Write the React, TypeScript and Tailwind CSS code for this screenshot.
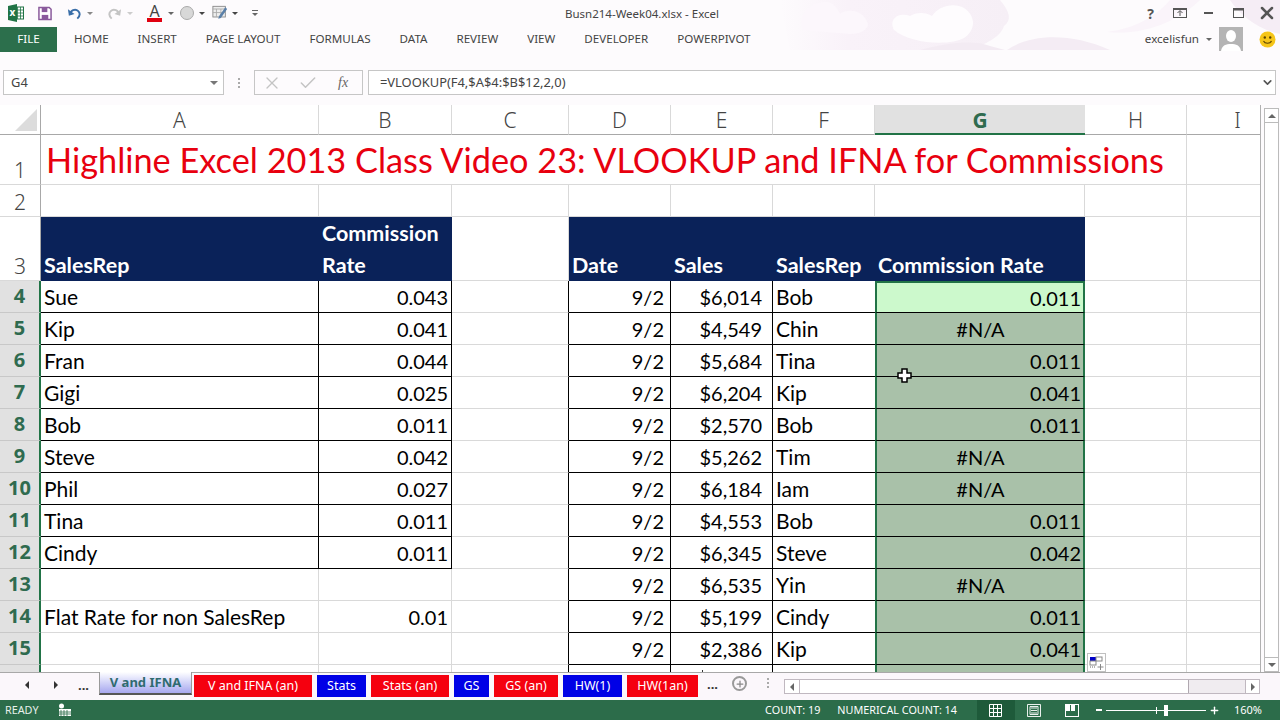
import { Check, ChevronDown, Plus, X } from "lucide-react";

const leftRows = [
  ["Sue", "0.043"],
  ["Kip", "0.041"],
  ["Fran", "0.044"],
  ["Gigi", "0.025"],
  ["Bob", "0.011"],
  ["Steve", "0.042"],
  ["Phil", "0.027"],
  ["Tina", "0.011"],
  ["Cindy", "0.011"],
];

const rightRows = [
  ["$6,014", "Bob", "0.011"],
  ["$4,549", "Chin", "#N/A"],
  ["$5,684", "Tina", "0.011"],
  ["$6,204", "Kip", "0.041"],
  ["$2,570", "Bob", "0.011"],
  ["$5,262", "Tim", "#N/A"],
  ["$6,184", "Iam", "#N/A"],
  ["$4,553", "Bob", "0.011"],
  ["$6,345", "Steve", "0.042"],
  ["$6,535", "Yin", "#N/A"],
  ["$5,199", "Cindy", "0.011"],
  ["$2,386", "Kip", "0.041"],
];

const columns = ["A", "B", "C", "D", "E", "F", "G", "H", "I"];
const ribbonTabs = ["HOME", "INSERT", "PAGE LAYOUT", "FORMULAS", "DATA", "REVIEW", "VIEW", "DEVELOPER", "POWERPIVOT"];
const sheetTabs = [
  ["V and IFNA (an)", "bg-[#f5000f] w-[118px]"],
  ["Stats", "bg-[#0000e6] w-[49px]"],
  ["Stats (an)", "bg-[#f5000f] w-[78px]"],
  ["GS", "bg-[#0000e6] w-[35px]"],
  ["GS (an)", "bg-[#f5000f] w-[64px]"],
  ["HW(1)", "bg-[#0000e6] w-[59px]"],
  ["HW(1an)", "bg-[#f5000f] w-[71px]"],
];

const gridCell = "border-r border-b border-[#d9d9d9]";
const blackCell = "border-r border-b border-black";
const cellText = "flex items-center px-[3px] text-[21px] text-black overflow-hidden whitespace-nowrap";
const numText = "flex items-center px-[3px] text-[20px] text-black overflow-hidden whitespace-nowrap";
const headText = "flex items-end px-[3px] text-[21.5px] font-bold leading-[32px] text-white bg-[#0a2259] overflow-hidden whitespace-nowrap";

function RowHeader({ n, active }: { n?: number; active?: boolean }) {
  return (
    <div
      className={
        active
          ? "flex items-end justify-center pb-[1px] bg-[#e1e1e1] border-r-2 border-r-[#217346] border-b border-b-[#c8c8c8] text-[20px] font-bold text-[#2f6b4f] font-['Noto_Sans',sans-serif] leading-[30px]"
          : "flex items-end justify-center bg-white border-r border-r-[#a8a8a8] border-b border-b-[#d9d9d9] text-[21px] font-light text-[#444] font-['Noto_Sans',sans-serif] leading-[28px]"
      }
    >
      {n}
    </div>
  );
}

function TitleDecor() {
  return (
    <svg className="absolute left-[760px] top-0" width="520" height="52" viewBox="0 0 520 52">
      <defs>
        <linearGradient id="fade" x1="0" x2="1" y1="0" y2="0">
          <stop offset="0" stopColor="#f9f2f9" stopOpacity="0" />
          <stop offset="0.3" stopColor="#f9f2f9" />
          <stop offset="1" stopColor="#f6eff6" />
        </linearGradient>
      </defs>
      <path d="M20 0H240C250 12 252 20 244 26C240 38 225 44 210 50H30Z" fill="url(#fade)" />
      <path d="M42 30C38 12 52 2 66 2C74 2 78 10 80 14C88 8 104 10 108 24C108 30 100 34 90 34Z" fill="#fcf7fc" />
      <path d="M134 30C128 18 140 12 150 16C156 12 166 12 172 16C178 6 194 2 204 8C216 16 216 30 204 38C190 46 150 44 134 30Z" fill="#fefcfe" />
      <path d="M160 50C190 42 215 40 230 46L245 50Z" fill="#f3ebf3" />
      <path d="M247 50C270 34 310 32 350 50Z" fill="#f4ecf4" />
      <path d="M300 0C340 0 380 0 440 0C420 20 385 36 347 32C380 28 400 12 410 0Z" fill="#faf4fa" />
      <path d="M470 0H520V34C500 30 480 16 470 0Z" fill="#f5edf5" />
    </svg>
  );
}

function ExcelLogo() {
  return (
    <svg width="16" height="18" viewBox="0 0 16 18">
      <rect x="6" y="3" width="9.5" height="12" fill="#fff" stroke="#217346" />
      <path d="M9.5 3v12M12.5 3v12M6 6h10M6 9h10M6 12h10" stroke="#217346" strokeWidth="0.8" />
      <path d="M0 2l9-2v18L0 16Z" fill="#217346" />
      <text x="1.5" y="12" fontSize="10" fontWeight="700" fill="#fff" fontFamily="Noto Sans">x</text>
    </svg>
  );
}

function Caret({ className }: { className: string }) {
  return <span className={`w-0 h-0 border-x-[3px] border-x-transparent border-t-[3px] ${className}`} />;
}

function QuickAccess() {
  return (
    <div className="flex items-center h-[26px] pl-[8px]">
      <ExcelLogo />
      <svg className="ml-[14px]" width="14" height="15" viewBox="0 0 15 15">
        <path d="M1 1h11l2 2v11H1Z" fill="#fff" stroke="#8a5a9c" strokeWidth="1.6" />
        <rect x="4" y="1" width="6" height="5" fill="#8a5a9c" />
        <rect x="4" y="9" width="7" height="5" fill="#8a5a9c" />
      </svg>
      <svg className="ml-[15px]" width="15" height="15" viewBox="0 0 16 15" fill="none">
        <path d="M4 9C3 4 9 2 12 5c2 2 2 5-1 8" stroke="#3a6ea8" strokeWidth="2" />
        <path d="M1 3l1 7 6-2Z" fill="#3a6ea8" />
      </svg>
      <Caret className="ml-[5px] border-t-[#888]" />
      <svg className="ml-[14px]" width="15" height="15" viewBox="0 0 16 15" fill="none">
        <path d="M12 9C13 4 7 2 4 5c-2 2-2 5 1 8" stroke="#c4c4c4" strokeWidth="2" />
        <path d="M15 3l-1 7-6-2Z" fill="#c4c4c4" />
      </svg>
      <Caret className="ml-[5px] border-t-[#ccc]" />
      <div className="ml-[14px] w-[15px] flex flex-col items-center text-[16px] leading-[14px] text-[#444] font-['Noto_Sans',sans-serif]">
        A
        <span className="block w-[15px] h-[4px] bg-[#e00010]" />
      </div>
      <Caret className="ml-[6px] border-t-[#666]" />
      <span className="ml-[6px] w-[14px] h-[14px] rounded-full bg-[#d8d8d8] border border-[#aaa]" />
      <Caret className="ml-[5px] border-t-[#444]" />
      <svg className="ml-[7px]" width="16" height="16" viewBox="0 0 18 17" fill="none">
        <rect x="1" y="1" width="14" height="12" fill="#eee" stroke="#888" />
        <path d="M1 4h14M5 4v9M10 4v9M1 8h14" stroke="#aaa" />
        <path d="M15 2L8 12l-1 3 3-1 7-10Z" fill="#5a7fa8" />
      </svg>
      <Caret className="ml-[4px] border-t-[#444]" />
      <div className="ml-[14px] flex flex-col items-center gap-[1px]">
        <span className="block w-[6px] h-[1px] bg-[#666]" />
        <span className="w-0 h-0 border-x-[3px] border-x-transparent border-t-[3px] border-t-[#666] mt-[1px]" />
      </div>
    </div>
  );
}

function WindowButtons() {
  return (
    <div className="flex items-center h-[26px] text-[#555]">
      <span className="w-[19px] text-[14px] font-bold font-['Noto_Sans',sans-serif] text-center">?</span>
      <svg className="ml-[13px]" width="14" height="10" viewBox="0 0 14 10" fill="none">
        <rect x="0.5" y="0.5" width="13" height="9" stroke="#555" />
        <path d="M7 8V3M4.5 5L7 2.5 9.5 5M0 1.5h14" stroke="#555" />
      </svg>
      <span className="ml-[17px] w-[9px] h-[2px] bg-[#555]" />
      <svg className="ml-[20px]" width="11" height="10" viewBox="0 0 11 10" fill="none">
        <rect x="0.5" y="0.5" width="10" height="9" stroke="#555" />
        <path d="M0 1.5h11" stroke="#555" strokeWidth="2" />
      </svg>
      <X className="ml-[13px] mr-[3px]" size={20} strokeWidth={3} />
    </div>
  );
}

function Smiley() {
  return (
    <svg width="17" height="17" viewBox="0 0 17 17">
      <circle cx="8.5" cy="8.5" r="8" fill="#f5c518" />
      <circle cx="5.8" cy="6.5" r="1.2" fill="#5a4200" />
      <circle cx="11.2" cy="6.5" r="1.2" fill="#5a4200" />
      <path d="M4.5 10c1.5 3 6.5 3 8 0" stroke="#5a4200" strokeWidth="1.1" fill="none" />
    </svg>
  );
}

function Avatar() {
  return (
    <svg width="24" height="24" viewBox="0 0 24 24">
      <rect width="24" height="24" fill="#b4b4b4" />
      <ellipse cx="12" cy="9" rx="5" ry="6" fill="#fff" />
      <path d="M2 24c1-6 5-7 10-7s9 1 10 7Z" fill="#fff" />
    </svg>
  );
}

function Ribbon() {
  return (
    <div className="relative h-[52px] bg-[#fdfbfd] shrink-0 overflow-hidden font-['Noto_Sans',sans-serif]">
      <TitleDecor />
      <div className="relative flex justify-between h-[26px]">
        <QuickAccess />
        <span className="absolute left-[565px] top-[5px] text-[11.5px] text-[#444] leading-[17px]">Busn214-Week04.xlsx - Excel</span>
        <WindowButtons />
      </div>
      <div className="relative flex items-center h-[26px]">
        <div className="w-[57px] h-[25px] bg-[#2c6f4c] text-white text-[11.6px] flex items-center justify-center">FILE</div>
        <div className="flex ml-[17px] gap-[29px] text-[11.6px] text-[#444]">
          {ribbonTabs.map((t) => (
            <span key={t}>{t}</span>
          ))}
        </div>
        <div className="ml-auto flex items-center text-[11.6px] text-[#444] pr-[4px]">
          <span>excelisfun</span>
          <Caret className="ml-[7px] border-t-[#666]" />
          <span className="ml-[7px]"><Avatar /></span>
          <span className="ml-[16px]"><Smiley /></span>
        </div>
      </div>
    </div>
  );
}

function FormulaBar() {
  return (
    <div className="flex items-start h-[53px] pt-[18px] pb-[10px] bg-[#fdfbfd] shrink-0 font-['Noto_Sans',sans-serif] text-[12.9px] text-[#444]">
      <div className="ml-[3px] w-[221px] h-[25px] bg-white border border-[#c6c6c6] flex items-center justify-between pl-[7px] pr-[5px]">
        <span>G4</span>
        <span className="w-0 h-0 border-x-[4px] border-x-transparent border-t-[4px] border-t-[#777]" />
      </div>
      <div className="w-[30px] h-[25px] flex flex-col items-center justify-center gap-[2px]">
        <span className="w-[2px] h-[2px] bg-[#aaa]" />
        <span className="w-[2px] h-[2px] bg-[#aaa]" />
        <span className="w-[2px] h-[2px] bg-[#aaa]" />
      </div>
      <div className="w-[109px] h-[25px] border border-[#c6c6c6] flex items-center pl-[7px] gap-[16px]">
        <X size={20} strokeWidth={1.6} className="text-[#c4c4c4]" />
        <Check size={20} strokeWidth={1.8} className="text-[#c4c4c4]" />
        <span className="ml-[4px] font-['Liberation_Serif',serif] italic text-[#666] text-[14px]">fx</span>
      </div>
      <div className="ml-[5px] w-[908px] h-[25px] bg-white border border-[#c6c6c6] flex items-center justify-between pl-[11px] pr-[1px]">
        <span>=VLOOKUP(F4,$A$4:$B$12,2,0)</span>
        <ChevronDown size={13} strokeWidth={3} className="text-[#555]" />
      </div>
    </div>
  );
}

function Sheet() {
  return (
    <div className="relative flex h-[567px] shrink-0 bg-[#fdfbfd] overflow-hidden">
      <div className="w-[1261px] bg-white overflow-hidden border-r border-r-[#b0b0b0] font-['Lato',sans-serif]">
        <div className="grid grid-cols-[41px_278px_133px_117px_102px_102px_102px_210px_102px_102px] grid-rows-[30px_50px_32px_64px_repeat(13,32px)]">
          {/* column headers */}
          <div className="relative bg-white border-r border-r-[#a8a8a8] border-b border-b-[#a8a8a8]">
            <span className="absolute right-[3px] bottom-[3px] w-0 h-0 border-l-[22px] border-l-transparent border-b-[22px] border-b-[#dcdcdc]" />
          </div>
          {columns.map((c) => (
            <div
              key={c}
              className={
                c === "G"
                  ? "flex items-center justify-center pt-[3px] bg-[#e1e1e1] border-b-2 border-b-[#217346] text-[21px] font-bold text-[#2f6b4f] font-['Noto_Sans',sans-serif]"
                  : "flex items-center justify-center pt-[3px] bg-white border-r border-r-[#d9d9d9] border-b border-b-[#a8a8a8] text-[21px] font-light text-[#444] font-['Noto_Sans',sans-serif]"
              }
            >
              {c}
            </div>
          ))}

          {/* row 1 */}
          <RowHeader n={1} />
          <div className={`col-span-8 ${gridCell} flex items-center pl-[5px] text-[34.3px] text-[#e8000f] whitespace-nowrap`}>
            Highline Excel 2013 Class Video 23: VLOOKUP and IFNA for Commissions
          </div>
          <div className={gridCell} />

          {/* row 2 */}
          <RowHeader n={2} />
          {columns.map((c) => (
            <div key={c} className={gridCell} />
          ))}

          {/* row 3 */}
          <RowHeader n={3} />
          <div className={`${headText} border-r border-r-[#0a2259]`}>SalesRep</div>
          <div className={`${headText} flex-col !items-start justify-end`}>
            <span>Commission</span>
            <span>Rate</span>
          </div>
          <div className={gridCell} />
          <div className={headText}>Date</div>
          <div className={headText}>Sales</div>
          <div className={headText}>SalesRep</div>
          <div className={headText}>Commission Rate</div>
          <div className={gridCell} />
          <div className={gridCell} />

          {/* rows 4 to 15 */}
          {rightRows.map((r, i) => {
            const left = leftRows[i];
            const n = i + 4;
            const isNa = r[2] === "#N/A";
            return [
              <RowHeader key={`h${n}`} n={n} active />,
              left ? (
                <div key={`a${n}`} className={`${cellText} ${blackCell}`}>{left[0]}</div>
              ) : (
                <div key={`a${n}`} className={`${cellText} ${gridCell}`}>
                  {n === 14 ? "Flat Rate for non SalesRep" : ""}
                </div>
              ),
              left ? (
                <div key={`b${n}`} className={`${numText} ${blackCell} justify-end`}>{left[1]}</div>
              ) : (
                <div key={`b${n}`} className={`${numText} ${gridCell} justify-end`}>
                  {n === 14 ? "0.01" : ""}
                </div>
              ),
              <div key={`c${n}`} className={`${gridCell} border-r-black`} />,
              <div key={`d${n}`} className={`${numText} ${blackCell} justify-end !pr-[6px]`}>9/2</div>,
              <div key={`e${n}`} className={`${numText} ${blackCell} justify-end !pr-[10px]`}>{r[0]}</div>,
              <div key={`f${n}`} className={`${cellText} border-b border-black`}>{r[1]}</div>,
              <div
                key={`g${n}`}
                className={`${numText} border-x-2 border-x-[#217346] border-b border-b-black !pr-[2px] ${
                  i === 0 ? "bg-[#ccf9cc] border-t-2 border-t-[#217346]" : "bg-[#a9c1a9]"
                } ${isNa ? "justify-center" : "justify-end"}`}
              >
                {r[2]}
              </div>,
              <div key={`h2${n}`} className={gridCell} />,
              <div key={`i${n}`} className={gridCell} />,
            ];
          })}

          {/* row 16, only its top edge is on screen */}
          <RowHeader active />
          <div className={gridCell} />
          <div className={gridCell} />
          <div className={`${gridCell} border-r-black`} />
          <div className={blackCell} />
          <div className={`${blackCell} flex items-start`}>
            <span className="ml-[31px] mt-[5px] w-[1px] h-[2px] bg-[#333]" />
          </div>
          <div className="border-b border-black" />
          <div className="border-x-2 border-x-[#217346] bg-[#a9c1a9]" />
          <div className={gridCell} />
          <div className={gridCell} />
        </div>
      </div>

      {/* vertical scrollbar */}
      <div className="w-[19px] flex flex-col pl-[3px] pt-[3px]">
        <div className="w-[15px] h-[15px] bg-white border border-[#bbb] flex items-center justify-center">
          <span className="w-0 h-0 border-x-[4px] border-x-transparent border-b-[4px] border-b-[#666]" />
        </div>
        <div className="w-[15px] flex-1 bg-white border-x border-[#bbb]" />
        <div className="w-[15px] h-[15px] bg-white border border-[#bbb] flex items-center justify-center">
          <span className="w-0 h-0 border-x-[4px] border-x-transparent border-t-[4px] border-t-[#666]" />
        </div>
      </div>

      {/* pointer over the selection */}
      <svg className="absolute left-[897px] top-[263px]" width="15" height="15" viewBox="0 0 15 15">
        <path d="M5 1h5v4h4v5h-4v4H5v-4H1V5h4Z" fill="#fff" stroke="#000" strokeWidth="1.5" />
      </svg>

      {/* quick analysis button */}
      <div className="absolute left-[1087px] top-[548px] w-[19px] h-[19px] bg-white border border-[#c0c0c0]">
        <svg width="17" height="17" viewBox="0 0 17 17" fill="none">
          <rect x="2" y="3" width="6" height="4" fill="#0000c8" />
          <rect x="8" y="3" width="6" height="4" stroke="#888" />
          <rect x="2" y="7" width="6" height="4" stroke="#888" />
          <path d="M2 13h6" stroke="#666" strokeDasharray="1 1" />
          <path d="M12.5 10v6M9.5 13h6" stroke="#888" />
        </svg>
      </div>
    </div>
  );
}

function TabBar() {
  return (
    <div className="flex items-start h-[28px] shrink-0 bg-[#fbf7fb] border-t border-t-[#a8a8a8] font-['Noto_Sans',sans-serif]">
      <div className="flex items-center w-[99px] h-[24px] text-[#333]">
        <span className="ml-[25px] w-0 h-0 border-y-[4px] border-y-transparent border-r-[4px] border-r-[#333]" />
        <span className="ml-[25px] w-0 h-0 border-y-[4px] border-y-transparent border-l-[4px] border-l-[#333]" />
        <span className="ml-[20px] text-[13px] font-bold leading-[22px]">...</span>
      </div>
      <div className="w-[93px] h-[23px] -mt-[1px] flex items-center justify-center bg-gradient-to-b from-white to-[#a7a7ee] border-x border-b-2 border-x-[#999] border-b-[#555] text-[13px] font-bold text-[#2f6b6f]">
        V and IFNA
      </div>
      <div className="flex gap-[5px] ml-[2px] mt-[2px]">
        {sheetTabs.map(([label, cls]) => (
          <div key={label} className={`${cls} h-[22px] flex items-center justify-center text-[12.5px] text-white`}>
            {label}
          </div>
        ))}
      </div>
      <span className="ml-[9px] w-[10px] text-[13px] font-bold leading-[22px] text-[#333]">...</span>
      <span className="ml-[15px] mt-[3px] w-[15px] h-[15px] rounded-full border-2 border-[#999] flex items-center justify-center">
        <Plus size={10} strokeWidth={3} className="text-[#888]" />
      </span>
      <div className="ml-[20px] mt-[5px] flex flex-col gap-[2px]">
        <span className="w-[2px] h-[2px] bg-[#aaa]" />
        <span className="w-[2px] h-[2px] bg-[#aaa]" />
        <span className="w-[2px] h-[2px] bg-[#aaa]" />
      </div>
      <div className="ml-[15px] mt-[6px] flex h-[15px] w-[476px] border border-[#c0b8c0]">
        <div className="w-[15px] bg-white border-r border-[#c0b8c0] flex items-center justify-center">
          <span className="w-0 h-0 border-y-[4px] border-y-transparent border-r-[4px] border-r-[#666]" />
        </div>
        <div className="w-[389px] bg-white border-r border-[#b0a8b0]" />
        <div className="flex-1 bg-[#f0ecf0]" />
        <div className="w-[14px] bg-white border-l border-[#c0b8c0] flex items-center justify-center">
          <span className="w-0 h-0 border-y-[4px] border-y-transparent border-l-[4px] border-l-[#666]" />
        </div>
      </div>
    </div>
  );
}

function StatusBar() {
  return (
    <div className="flex items-center h-[20px] shrink-0 bg-[#2c6c4a] text-[10.8px] text-white font-['Noto_Sans',sans-serif]">
      <span className="ml-[5px] text-[#e8f0ea]">READY</span>
      <svg className="ml-[19px]" width="14" height="14" viewBox="0 0 14 14" fill="none">
        <circle cx="3.5" cy="3" r="2.5" fill="#fff" />
        <rect x="1" y="6" width="12" height="7" fill="#fff" />
        <path d="M3 7v6M6 7v6M9 7v6M1 9h12M1 11h12" stroke="#2c6c4a" strokeWidth="0.8" />
      </svg>
      <span className="ml-auto mr-[17px]">COUNT: 19</span>
      <span className="mr-[20px]">NUMERICAL COUNT: 14</span>
      <div className="w-[38px] h-[20px] flex items-center justify-center bg-[#1e5a3a]">
        <svg width="13" height="13" viewBox="0 0 13 13" fill="none" stroke="#fff">
          <path d="M.5.5h12v12H.5ZM4.5.5v12M8.5.5v12M.5 4.5h12M.5 8.5h12" />
        </svg>
      </div>
      <svg className="ml-[12px]" width="14" height="13" viewBox="0 0 14 13" fill="none" stroke="#fff">
        <path d="M.5.5h13v12H.5ZM4 4h6M4 6.5h6M4 9h6M3 2.5h8v8H3Z" strokeWidth="0.9" />
      </svg>
      <svg className="ml-[24px]" width="14" height="13" viewBox="0 0 14 13" fill="none">
        <rect x=".5" y=".5" width="13" height="12" stroke="#fff" />
        <rect x="1" y="1" width="4" height="6" fill="#fff" />
        <rect x="6" y="1" width="4" height="6" fill="#fff" />
      </svg>
      <span className="ml-[17px] w-[6px] h-[2px] bg-white" />
      <div className="relative ml-[4px] w-[100px] h-[1px] bg-white">
        <span className="absolute left-[50px] -top-[3px] w-[1px] h-[7px] bg-white" />
        <span className="absolute left-[58px] -top-[5px] w-[4px] h-[11px] bg-white" />
      </div>
      <Plus className="ml-[3px]" size={11} strokeWidth={3} />
      <span className="ml-[14px] mr-[18px] text-[11px]">160%</span>
    </div>
  );
}

export default function App() {
  return (
    <div className="flex flex-col w-[1280px] h-[720px] overflow-hidden bg-white">
      <Ribbon />
      <FormulaBar />
      <Sheet />
      <TabBar />
      <StatusBar />
    </div>
  );
}
